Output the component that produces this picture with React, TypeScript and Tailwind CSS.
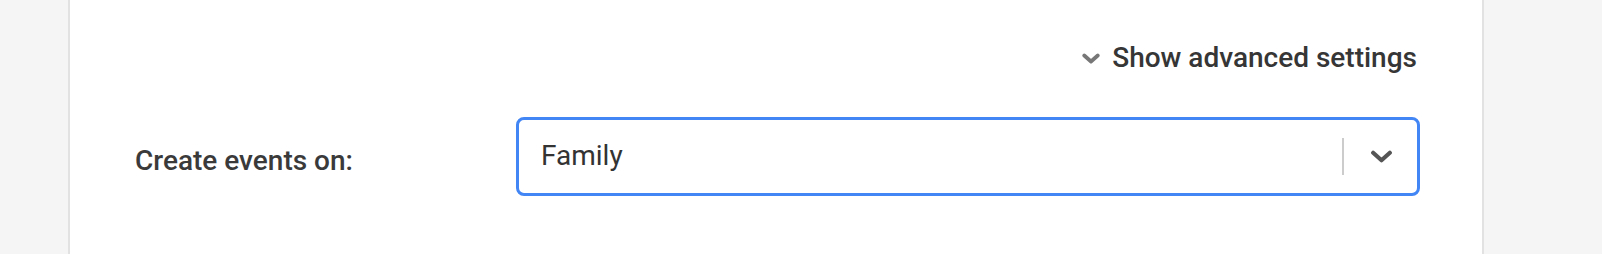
import React from 'react';

function Chevron({ className, strokeWidth }: { className?: string; strokeWidth: number }) {
  return (
    <svg viewBox="0 0 24 14" className={className} fill="none" stroke="currentColor" strokeWidth={strokeWidth} strokeLinecap="round" strokeLinejoin="round">
      <path d="M3 3 L12 11 L21 3" />
    </svg>
  );
}

export default function App() {
  return (
    <div className="w-full h-[254px] bg-[#f5f5f5] flex font-['Roboto',sans-serif] text-[#333333]">
      <div className="ml-[68px] w-[1416px] h-full bg-white border-x-2 border-[#e2e2e2] px-[65px] pt-[41px]">
        <div className="flex justify-end">
          <button className="flex items-center gap-[12px] text-[28px] leading-[34px] font-medium text-[#363636]">
            <Chevron className="w-[18px] h-[11px] text-[#777777]" strokeWidth={5} />
            <span>Show advanced settings</span>
          </button>
        </div>

        <div className="flex items-center mt-[42px]">
          <label className="w-[381px] text-[28px] leading-[34px] font-medium text-[#3a3a3a] pt-[8px]">
            Create events on:
          </label>
          <div className="flex-1 -mr-[3px] h-[79px] border-[3px] border-[#4285f4] rounded-[8px] flex items-center pl-[22px] pr-[24px]">
            <span className="flex-1 text-[28px] leading-[34px] text-[#333333] -mt-[2px]">Family</span>
            <div className="w-[2px] h-[37px] bg-[#cccccc]" />
            <Chevron className="ml-[26px] w-[23px] h-[13px] text-[#555555]" strokeWidth={4.5} />
          </div>
        </div>
      </div>
    </div>
  );
}
